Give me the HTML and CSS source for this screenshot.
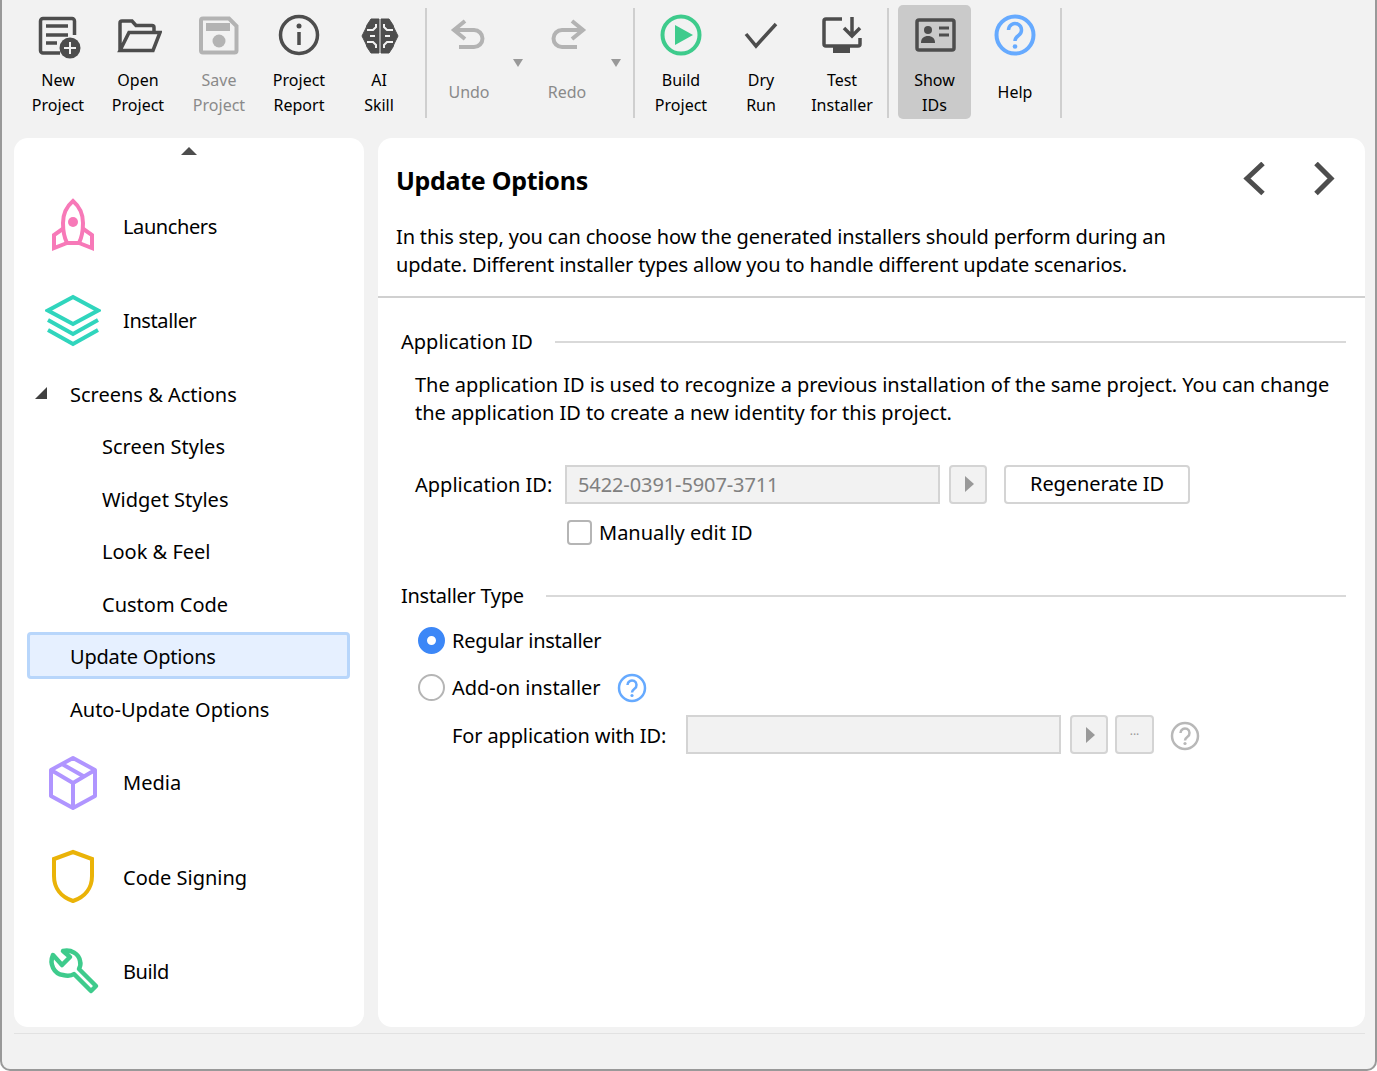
FILE: index.html
```html
<!DOCTYPE html>
<html>
<head>
  <title>Update Options</title>
  <link rel="stylesheet" href="styles.css">
</head>
<body>
<div class="window">
  <div class="toolbar">
    <div class="tool">
      <svg class="ticon" viewBox="0 0 48 48"><path class="dark" d="M26 42H9a2.500 2.500 0 0 1-2.500-2.500V10A2.500 2.500 0 0 1 9 7.500h29a2.500 2.500 0 0 1 2.500 2.500v14"/><path class="dark" d="M12 15h22M12 24h22M12 32h11"/><circle cx="36" cy="37" r="10.500" fill="#4d4d4d"/><path d="M36 31v12M30 37h12" fill="none" stroke="#f2f2f2" stroke-width="2"/></svg>
      <span>New<br>Project</span>
    </div>
    <div class="tool">
      <svg class="ticon" viewBox="0 0 48 48"><path class="dark" d="M6 39V12a2 2 0 0 1 2-2h10l4 4.500h16a2 2 0 0 1 2 2V22M6 39.500h33l7-18H15z"/></svg>
      <span>Open<br>Project</span>
    </div>
    <div class="tool off nudge">
      <svg class="ticon" viewBox="0 0 48 48"><path class="gray" d="M8 7.500h26l7.500 7.500v24.500a2 2 0 0 1-2 2H8a2 2 0 0 1-2-2V9.500a2 2 0 0 1 2-2z"/><rect x="11" y="12" width="24" height="8" fill="#b3b3b3"/><circle cx="24" cy="30" r="6.500" fill="#b3b3b3"/></svg>
      <span>Save<br>Project</span>
    </div>
    <div class="tool">
      <svg class="ticon" viewBox="0 0 48 48"><circle class="dark" cx="24" cy="24" r="18.500"/><circle cx="24" cy="15" r="2.500" fill="#4d4d4d"/><path d="M24 21v13" class="dark"/></svg>
      <span>Project<br>Report</span>
    </div>
    <div class="tool">
      <svg class="ticon" viewBox="0 0 48 48"><path class="brain" d="M24 8h-8l-4 6-1 3-4 8 4 8 1 3 4 6h8zM26 8h8l4 6 1 3 4 8-4 8-1 3-4 6h-8z"/><path d="M12 19h6l3-3v-3M12 31h6l3 3v3M38 19h-6l-3-3v-3M38 31h-6l-3 3v3M15 25h5M35 25h-5" fill="none" stroke="#f2f2f2" stroke-width="2"/></svg>
      <span>AI<br>Skill</span>
    </div>
    <div class="sep"></div>
    <div class="tool off split">
      <svg class="ticon" viewBox="0 0 48 48"><path class="gray" d="M20 10L9 19l11 9M9 19h20a8.500 8.500 0 0 1 0 17H14"/></svg>
      <span class="single">Undo</span>
      <i class="drop"></i>
    </div>
    <div class="tool off split">
      <svg class="ticon" viewBox="0 0 48 48"><path class="gray" d="M29 10l11 9-11 9M40 19H19a8.500 8.500 0 0 0 0 17h15"/></svg>
      <span class="single">Redo</span>
      <i class="drop"></i>
    </div>
    <div class="sep sep-b"></div>
    <div class="tool">
      <svg class="ticon" viewBox="0 0 48 48"><circle cx="24" cy="24" r="18.500" fill="none" stroke="#3ecb8c" stroke-width="4"/><path d="M18 14l18 10-18 10z" fill="#3ecb8c"/></svg>
      <span>Build<br>Project</span>
    </div>
    <div class="tool">
      <svg class="ticon" viewBox="0 0 48 48"><path class="dark" d="M9 23l10 12 20-22"/></svg>
      <span>Dry<br>Run</span>
    </div>
    <div class="tool nudge">
      <svg class="ticon" viewBox="0 0 48 48"><path class="dark" d="M24 8H8a2 2 0 0 0-2 2v23a2 2 0 0 0 2 2h32a2 2 0 0 0 2-2v-6"/><rect x="15" y="36" width="17" height="6" fill="#4d4d4d"/><path class="dark" d="M34 6v19M26 17l8 8 8-8"/></svg>
      <span>Test<br>Installer</span>
    </div>
    <div class="sep sep-c"></div>
    <div class="tool active">
      <svg class="ticon" viewBox="0 0 48 48"><rect class="dark" x="6" y="9" width="37" height="30" rx="2"/><circle cx="17" cy="19" r="4" fill="#4d4d4d"/><path d="M10 32c0-5 3-7 7-7s7 2 7 7z" fill="#4d4d4d"/><path d="M28 17h10M28 24h10" fill="none" stroke="#4d4d4d" stroke-width="3"/></svg>
      <span>Show<br>IDs</span>
    </div>
    <div class="tool help-tool">
      <svg class="ticon" viewBox="0 0 48 48"><circle cx="24" cy="24" r="18.500" fill="none" stroke="#66aaff" stroke-width="4"/><path d="M17.500 19a6.500 6.500 0 1 1 10 5.500c-2.500 1.700-3.500 2.500-3.500 5.500" fill="none" stroke="#66aaff" stroke-width="3.500"/><circle cx="24" cy="35.500" r="2.300" fill="#66aaff"/></svg>
      <span class="single">Help</span>
    </div>
    <div class="sep sep-d"></div>
  </div>

  <div class="main">
    <div class="side">
      <div class="up"></div>
      <div class="big">
        <svg class="sicon" viewBox="0 0 56 56"><g fill="none" stroke="#f779b8" stroke-width="4"><path d="M28 3c-7 6-10 14-10 22 0 7 1 14 4 20h12c3-6 4-13 4-20 0-8-3-16-10-22z"/><path d="M19 30L9 37v13l13-5M37 30l10 7v13l-13-5"/></g><circle cx="28" cy="24" r="5" fill="#f779b8"/></svg>
        <span class="tight">Launchers</span>
      </div>
      <div class="big">
        <svg class="sicon" viewBox="0 0 56 56"><g fill="none" stroke="#30d5bd" stroke-width="4"><path d="M28 4l25 13.500L28 31 3 17.500z"/><path d="M3 27l25 14 25-14M3 37l25 14 25-14"/></g></svg>
        <span class="tight">Installer</span>
      </div>
      <div class="node top"><i class="open"></i>Screens &amp; Actions</div>
      <div class="node sub">Screen Styles</div>
      <div class="node sub">Widget Styles</div>
      <div class="node sub">Look &amp; Feel</div>
      <div class="node sub">Custom Code</div>
      <div class="node top sel">Update Options</div>
      <div class="node top">Auto-Update Options</div>
      <div class="big">
        <svg class="sicon" viewBox="0 0 56 56"><path d="M28 3l22 12v26L28 53 6 41V15zM6 15l22 13 22-13M28 28v25M17 9l22 12.500" fill="none" stroke="#b095ff" stroke-width="4" stroke-linejoin="round"/></svg>
        <span>Media</span>
      </div>
      <div class="big">
        <svg class="sicon" viewBox="0 0 56 56"><path d="M28 3l19 7v17c0 12-7 21-19 25C16 48 9 39 9 27V10z" fill="none" stroke="#eab308" stroke-width="4"/></svg>
        <span>Code Signing</span>
      </div>
      <div class="big">
        <svg class="sicon" viewBox="0 0 56 56"><path d="M8 11l9 10 8-8-7-6c8-2 16 3 17 10 1 3 0 6-1 8l17 17-5 5-17-17c-3 2-7 2-11 1C9 30 4 20 8 11z" fill="none" stroke="#3ecb8c" stroke-width="4.500" stroke-linejoin="round"/></svg>
        <span class="tight">Build</span>
      </div>
    </div>

    <div class="content">
      <div class="head">
        <div class="head-top">
          <h1>Update Options</h1>
          <svg class="chev" viewBox="0 1.500 26 36"><path d="M21 3L5 18l16 15" fill="none" stroke="#4d4d4d" stroke-width="5"/></svg>
          <svg class="chev" viewBox="0 1.500 26 36"><path d="M6 3l15 15L6 33" fill="none" stroke="#4d4d4d" stroke-width="5"/></svg>
        </div>
        <p>In this step, you can choose how the generated installers should perform during an<br>update. Different installer types allow you to handle different update scenarios.</p>
      </div>
      <div class="form">
        <div class="legend"><span>Application ID</span><hr></div>
        <p class="info">The application ID is used to recognize a previous installation of the same project. You can change<br>the application ID to create a new identity for this project.</p>
        <div class="row id-row">
          <label>Application ID:</label>
          <div class="field">5422-0391-5907-3711</div>
          <div class="btn small"><i class="tri"></i></div>
          <div class="btn regen">Regenerate ID</div>
        </div>
        <div class="row check-row"><i class="check"></i>Manually edit ID</div>
        <div class="legend second"><span>Installer Type</span><hr></div>
        <div class="row radio-row first"><i class="radio on"></i>Regular installer</div>
        <div class="row radio-row"><i class="radio"></i>Add-on installer
          <svg class="qm" viewBox="0 0 30 30"><circle cx="15" cy="15" r="13" fill="none" stroke="#66aaff" stroke-width="2.500"/><path d="M10.500 12a4.500 4.500 0 1 1 7 3.700c-1.700 1.200-2.500 1.800-2.500 3.800" fill="none" stroke="#66aaff" stroke-width="2.500"/><circle cx="15" cy="22.500" r="1.600" fill="#66aaff"/></svg>
        </div>
        <div class="row for-row">
          <label>For application with ID:</label>
          <div class="field"></div>
          <div class="btn small"><i class="tri"></i></div>
          <div class="btn small dots">···</div>
          <svg class="qm" viewBox="0 0 30 30"><circle cx="15" cy="15" r="13" fill="none" stroke="#b8b8b8" stroke-width="2.500"/><path d="M10.500 12a4.500 4.500 0 1 1 7 3.700c-1.700 1.200-2.500 1.800-2.500 3.800" fill="none" stroke="#b8b8b8" stroke-width="2.500"/><circle cx="15" cy="22.500" r="1.600" fill="#b8b8b8"/></svg>
        </div>
      </div>
    </div>
  </div>
  <div class="status"></div>
</div>
</body>
</html>
```

FILE: styles.css
```css
html, body {
  margin: 0;
  padding: 0;
  overflow: hidden;
  background-color: #fff;
}
body {
  font-family: "Noto Sans", sans-serif;
  color: #000;
}
.window {
  box-sizing: border-box;
  width: 1377px;
  height: 1071px;
  background-color: #f2f2f2;
  border: 2px solid #999;
  border-top: none;
  border-radius: 0 0 10px 10px;
  display: flex;
  flex-direction: column;
}

/* toolbar */
.toolbar {
  display: flex;
  height: 138px;
  padding: 5px 0 0 16px;
  box-sizing: border-box;
  flex-shrink: 0;
  align-items: flex-start;
}
.tool {
  position: relative;
  width: 80px;
  height: 114px;
  text-align: center;
  font-size: 16px;
  line-height: 25px;
  display: flex;
  flex-direction: column;
  align-items: center;
  border-radius: 5px;
}
.nudge {
  margin-left: 1px;
}
.ticon {
  width: 48px;
  height: 48px;
  margin-top: 6px;
  flex-shrink: 0;
}
.tool span {
  margin-top: 9px;
}
.tool .single {
  margin-top: 21px;
}
.off {
  color: #8a8a8a;
}
.split {
  width: 98px;
}
.split .ticon,
.split span {
  margin-right: 18px;
}
.drop {
  position: absolute;
  right: 4px;
  top: 54px;
  border-left: 5.500px solid transparent;
  border-right: 5.500px solid transparent;
  border-top: 8px solid #999;
}
.active {
  background-color: #cacaca;
  width: 73px;
}
.help-tool {
  margin-left: 4px;
}
.sep {
  width: 2px;
  height: 110px;
  margin: 3px 2px 0 6px;
  background-color: #cfcfcf;
}
.sep-b {
  margin-left: 8px;
  margin-right: 6px;
}
.sep-c {
  margin-left: 5px;
  margin-right: 9px;
}
.sep-d {
  margin-left: 5px;
}
.dark, .gray, .brain {
  fill: none;
  stroke: #4d4d4d;
  stroke-width: 3.500;
}
.gray {
  stroke: #b3b3b3;
  stroke-width: 4;
}
.brain {
  fill: #4d4d4d;
  stroke-width: 1;
}

/* main panels */
.main {
  display: flex;
  gap: 14px;
  height: 889px;
  padding: 0 10px 0 12px;
  flex-shrink: 0;
}
.side {
  width: 350px;
  background-color: #fff;
  border-radius: 14px;
  box-sizing: border-box;
  padding-top: 41px;
  position: relative;
  font-size: 20px;
}
.up {
  position: absolute;
  left: 167px;
  top: 9px;
  border-left: 8px solid transparent;
  border-right: 8px solid transparent;
  border-bottom: 8px solid #4d4d4d;
}
.big {
  display: flex;
  align-items: center;
  height: 94.500px;
  padding-left: 31px;
  gap: 22px;
}
.tight {
  letter-spacing: -0.4px;
}
.sicon {
  width: 56px;
  height: 56px;
}
.node {
  display: flex;
  align-items: center;
  height: 52.500px;
  box-sizing: border-box;
  position: relative;
}
.top {
  padding-left: 56px;
}
.sub {
  padding-left: 88px;
}
.open {
  position: absolute;
  left: 21px;
  top: 19px;
  width: 0;
  height: 0;
  border-left: 12px solid transparent;
  border-bottom: 12px solid #404040;
}
.sel {
  margin-left: 13px;
  margin-right: 14px;
  padding-left: 40px;
  padding-top: 2px;
  height: 47px;
  margin-top: 1px;
  margin-bottom: 4.500px;
  background-color: #e6f0ff;
  border: 3px solid #b8d6fb;
  border-radius: 4px;
  letter-spacing: -0.2px;
}
.content {
  flex: 1;
  background-color: #fff;
  border-radius: 14px;
  font-size: 20px;
  line-height: 28px;
}
.head {
  height: 160px;
  box-sizing: border-box;
  border-bottom: 2px solid #d0d0d0;
  padding: 24px 29px 0 18px;
}
.head-top {
  display: flex;
  align-items: center;
  height: 36px;
}
h1 {
  margin: 0;
  flex: 1;
  font-size: 25px;
  font-weight: 700;
  letter-spacing: -0.3px;
}
.chev {
  width: 26px;
  height: 36px;
  margin-left: 42px;
}
.head p {
  margin: 25px 0 0;
  letter-spacing: -0.155px;
}
.form {
  padding: 29px 19px 0 23px;
}
.legend {
  display: flex;
  align-items: center;
  gap: 22px;
  height: 30px;
}
.legend hr {
  flex: 1;
  margin: 0;
  border: none;
  height: 2px;
  background-color: #d9d9d9;
}
.second {
  margin-top: 29px;
  letter-spacing: -0.28px;
}
.info {
  margin: 14px 0 0 14px;
  letter-spacing: -0.04px;
}
.row {
  display: flex;
  align-items: center;
  margin-left: 14px;
}
.id-row {
  margin-top: 38px;
  height: 40px;
}
.id-row label {
  width: 150px;
}
.field {
  box-sizing: border-box;
  width: 375px;
  height: 39px;
  margin-bottom: 2px;
  background-color: #f2f2f2;
  border: 2px solid #d4d4d4;
  padding-left: 11px;
  line-height: 35px;
  color: #808080;
  letter-spacing: -0.1px;
}
.btn {
  box-sizing: border-box;
  height: 39px;
  margin-bottom: 2px;
  border: 2px solid #d4d4d4;
  border-radius: 4px;
  display: flex;
  align-items: center;
  justify-content: center;
}
.small {
  width: 38px;
  margin-left: 9px;
  background-color: #f2f2f2;
}
.regen {
  width: 186px;
  margin-left: 17px;
  background-color: #fff;
  letter-spacing: -0.1px;
}
.tri {
  border-top: 8px solid transparent;
  border-bottom: 8px solid transparent;
  border-left: 9px solid #999;
  margin-left: 2px;
}
.dots {
  margin-left: 7px;
  width: 39px;
  color: #999;
  font-size: 12px;
}
.check-row {
  margin-left: 166px;
  margin-top: 9px;
  height: 38px;
}
.check {
  box-sizing: border-box;
  width: 25px;
  height: 25px;
  margin-bottom: 2px;
  border: 2px solid #b5b5b5;
  border-radius: 4px;
  margin-right: 7px;
}
.radio-row {
  margin-left: 17px;
  height: 47px;
  letter-spacing: -0.02px;
}
.first {
  margin-top: 6px;
  letter-spacing: -0.25px;
}
.radio {
  box-sizing: border-box;
  width: 27px;
  height: 27px;
  border: 2px solid #b5b5b5;
  border-radius: 50%;
  margin-right: 7px;
}
.radio.on {
  border: 9px solid #3c87f7;
  background-color: #fff;
}
.qm {
  width: 30px;
  height: 30px;
  margin-left: 16px;
}
.for-row {
  margin-left: 51px;
  margin-top: 1px;
  height: 47px;
}
.for-row label {
  width: 234px;
  letter-spacing: -0.13px;
}
.for-row .qm {
  margin-left: 16px;
}
.status {
  margin: 6px 10px 0 12px;
  border-top: 1px solid #e2e2e2;
  flex: 1;
}
```
